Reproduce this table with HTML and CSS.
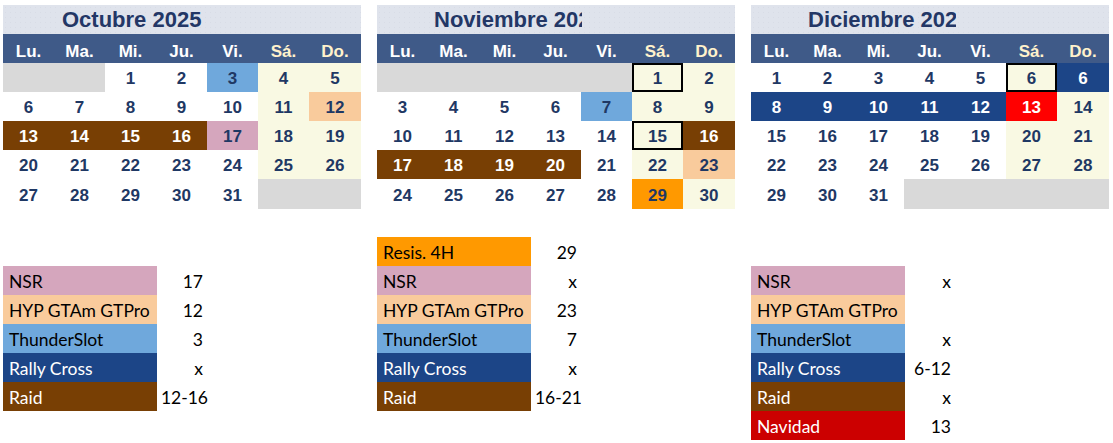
FILE: index.html
```html
<!DOCTYPE html>
<html lang="es">
<head>
<meta charset="utf-8">
<title>Calendario</title>
<link rel="stylesheet" href="styles.css">
</head>
<body>
<div class="page">
  <div class="months">
    <section class="month">
      <div class="title"><span class="title-text oct">Octubre 2025</span></div>
      <div class="dow"><span>Lu.</span><span>Ma.</span><span>Mi.</span><span>Ju.</span><span>Vi.</span><span class="wk">Sá.</span><span class="wk">Do.</span></div>
      <div class="days">
        <span class="c em"></span><span class="c em"></span><span class="c">1</span><span class="c">2</span><span class="c blue">3</span><span class="c we">4</span><span class="c we">5</span>
        <span class="c">6</span><span class="c">7</span><span class="c">8</span><span class="c">9</span><span class="c">10</span><span class="c we">11</span><span class="c peach">12</span>
        <span class="c brown">13</span><span class="c brown">14</span><span class="c brown">15</span><span class="c brown">16</span><span class="c pink">17</span><span class="c we">18</span><span class="c we">19</span>
        <span class="c">20</span><span class="c">21</span><span class="c">22</span><span class="c">23</span><span class="c">24</span><span class="c we">25</span><span class="c we">26</span>
        <span class="c">27</span><span class="c">28</span><span class="c">29</span><span class="c">30</span><span class="c">31</span><span class="c em"></span><span class="c em"></span>
      </div>
    </section>
    <section class="month">
      <div class="title"><span class="title-text">Noviembre 2025</span></div>
      <div class="dow"><span>Lu.</span><span>Ma.</span><span>Mi.</span><span>Ju.</span><span>Vi.</span><span class="wk">Sá.</span><span class="wk">Do.</span></div>
      <div class="days">
        <span class="c em"></span><span class="c em"></span><span class="c em"></span><span class="c em"></span><span class="c em"></span><span class="c we box">1</span><span class="c we">2</span>
        <span class="c">3</span><span class="c">4</span><span class="c">5</span><span class="c">6</span><span class="c blue">7</span><span class="c we">8</span><span class="c we">9</span>
        <span class="c">10</span><span class="c">11</span><span class="c">12</span><span class="c">13</span><span class="c">14</span><span class="c we box">15</span><span class="c brown">16</span>
        <span class="c brown">17</span><span class="c brown">18</span><span class="c brown">19</span><span class="c brown">20</span><span class="c">21</span><span class="c we">22</span><span class="c peach">23</span>
        <span class="c">24</span><span class="c">25</span><span class="c">26</span><span class="c">27</span><span class="c">28</span><span class="c orange">29</span><span class="c we">30</span>
      </div>
    </section>
    <section class="month">
      <div class="title"><span class="title-text">Diciembre 2025</span></div>
      <div class="dow"><span>Lu.</span><span>Ma.</span><span>Mi.</span><span>Ju.</span><span>Vi.</span><span class="wk">Sá.</span><span class="wk">Do.</span></div>
      <div class="days">
        <span class="c">1</span><span class="c">2</span><span class="c">3</span><span class="c">4</span><span class="c">5</span><span class="c we box">6</span><span class="c navy">6</span>
        <span class="c navy">8</span><span class="c navy">9</span><span class="c navy">10</span><span class="c navy">11</span><span class="c navy">12</span><span class="c red">13</span><span class="c we">14</span>
        <span class="c">15</span><span class="c">16</span><span class="c">17</span><span class="c">18</span><span class="c">19</span><span class="c we">20</span><span class="c we">21</span>
        <span class="c">22</span><span class="c">23</span><span class="c">24</span><span class="c">25</span><span class="c">26</span><span class="c we">27</span><span class="c we">28</span>
        <span class="c">29</span><span class="c">30</span><span class="c">31</span><span class="c em"></span><span class="c em"></span><span class="c em"></span><span class="c em"></span>
      </div>
    </section>
  </div>
  <div class="legends">
    <div class="legend offset">
      <div class="lrow"><span class="lab l-nsr">NSR</span><span class="val">17</span></div>
      <div class="lrow"><span class="lab l-hyp">HYP GTAm GTPro</span><span class="val">12</span></div>
      <div class="lrow"><span class="lab l-thu">ThunderSlot</span><span class="val">3</span></div>
      <div class="lrow"><span class="lab l-ral">Rally Cross</span><span class="val">x</span></div>
      <div class="lrow"><span class="lab l-rai">Raid</span><span class="val range">12-16</span></div>
    </div>
    <div class="legend">
      <div class="lrow"><span class="lab l-res">Resis. 4H</span><span class="val">29</span></div>
      <div class="lrow"><span class="lab l-nsr">NSR</span><span class="val">x</span></div>
      <div class="lrow"><span class="lab l-hyp">HYP GTAm GTPro</span><span class="val">23</span></div>
      <div class="lrow"><span class="lab l-thu">ThunderSlot</span><span class="val">7</span></div>
      <div class="lrow"><span class="lab l-ral">Rally Cross</span><span class="val">x</span></div>
      <div class="lrow"><span class="lab l-rai">Raid</span><span class="val range">16-21</span></div>
    </div>
    <div class="legend offset">
      <div class="lrow"><span class="lab l-nsr">NSR</span><span class="val">x</span></div>
      <div class="lrow"><span class="lab l-hyp">HYP GTAm GTPro</span><span class="val"></span></div>
      <div class="lrow"><span class="lab l-thu">ThunderSlot</span><span class="val">x</span></div>
      <div class="lrow"><span class="lab l-ral">Rally Cross</span><span class="val">6-12</span></div>
      <div class="lrow"><span class="lab l-rai">Raid</span><span class="val">x</span></div>
      <div class="lrow"><span class="lab l-nav">Navidad</span><span class="val">13</span></div>
    </div>
  </div>
</div>
</body>
</html>
```
FILE: styles.css
```css
* { box-sizing: border-box; }
body {
  margin: 0;
  background: #ffffff;
  font-family: "Liberation Sans", Arial, sans-serif;
}
.page {
  padding: 5px 0 0 3px;
}
.months, .legends {
  display: flex;
  gap: 16px;
}
.month {
  width: 358px;
}
.title {
  height: 29px;
  background-color: #dfe3ec;
  background-image: radial-gradient(circle, #d8dce6 0.5px, transparent 0.7px);
  background-size: 5px 5px;
}
.title-text {
  display: block;
  width: 205px;
  height: 29px;
  overflow: hidden;
  white-space: nowrap;
  padding-left: 57px;
  font-weight: bold;
  font-size: 22px;
  line-height: 29px;
  color: #233766;
}
.title-text.oct { padding-left: 59px; }
.dow {
  display: grid;
  grid-template-columns: 51px 51px 51px 51px 51px 51px 52px;
  height: 29px;
  background: #3f5a88;
}
.dow span {
  display: flex;
  align-items: flex-end;
  justify-content: center;
  padding-bottom: 1px;
  font-weight: bold;
  font-size: 17px;
  color: #ffffff;
}
.dow span.wk { color: #fff2cc; }
.days {
  display: grid;
  grid-template-columns: 51px 51px 51px 51px 51px 51px 52px;
  grid-template-rows: 29px 29px 29px 29px 30px;
}
.c {
  display: flex;
  align-items: center;
  justify-content: center;
  padding-top: 3px;
  font-weight: bold;
  font-size: 17px;
  color: #1f3864;
}
.we { background: #f9f9e3; }
.em { background: #d9d9d9; }
.blue { background: #6fa8dc; }
.peach { background: #f9cb9c; }
.pink { background: #d5a6bd; }
.brown { background: #783f04; color: #ffffff; }
.orange { background: #ff9900; }
.navy { background: #1c4587; color: #ffffff; }
.red { background: #ff0000; color: #ffffff; }
.box { box-shadow: inset 0 0 0 2px #000000; }

.legends {
  margin-top: 28px;
}
.legend {
  width: 358px;
  display: flex;
  flex-direction: column;
}
.legend.offset { padding-top: 29px; }
.lrow {
  display: flex;
  height: 29px;
  font-family: Lato, "Liberation Sans", sans-serif;
  font-size: 17.5px;
}
.lab {
  width: 154px;
  padding-left: 6px;
  display: flex;
  align-items: flex-end;
  padding-bottom: 3px;
  color: #000000;
  white-space: nowrap;
}
.val {
  width: 51px;
  padding-right: 5px;
  display: flex;
  align-items: flex-end;
  justify-content: flex-end;
  padding-bottom: 3px;
  color: #000000;
  white-space: nowrap;
}
.val.range { padding-right: 0; }
.l-nsr { background: #d5a6bd; }
.l-hyp { background: #f9cb9c; }
.l-thu { background: #6fa8dc; }
.l-ral { background: #1c4587; color: #ffffff; }
.l-rai { background: #783f04; color: #ffffff; }
.l-nav { background: #cc0000; color: #ffffff; }
.l-res { background: #ff9900; }
```
